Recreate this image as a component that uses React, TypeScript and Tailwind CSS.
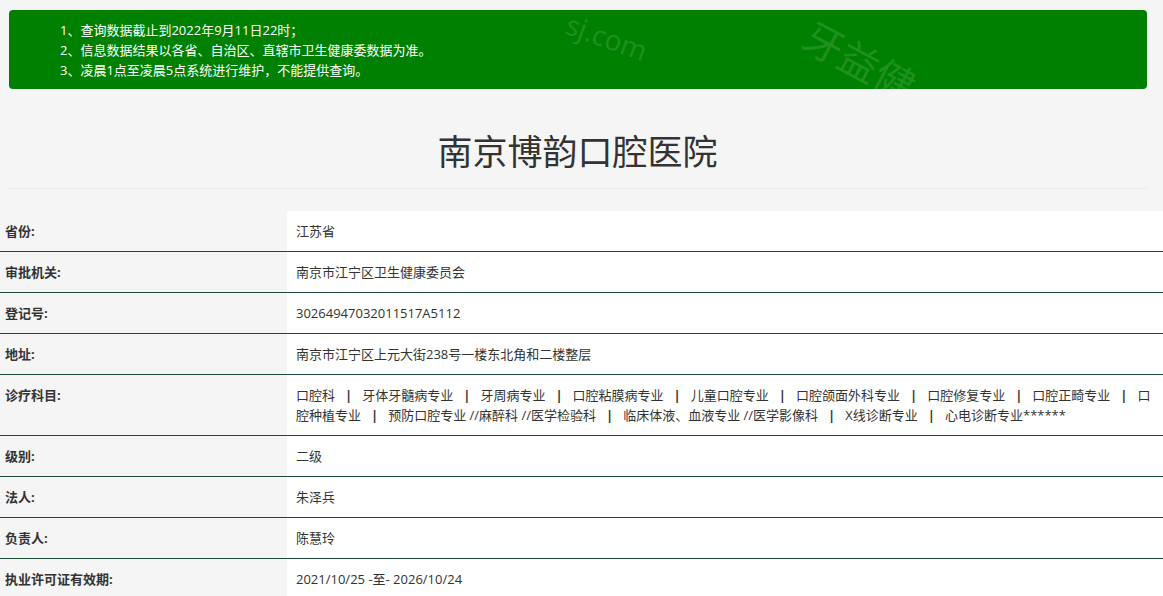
const NOTICES = [
  '1、查询数据截止到2022年9月11日22时；',
  '2、信息数据结果以各省、自治区、直辖市卫生健康委数据为准。',
  '3、凌晨1点至凌晨5点系统进行维护，不能提供查询。',
];

const SUBJECTS = [
  '口腔科',
  '牙体牙髓病专业',
  '牙周病专业',
  '口腔粘膜病专业',
  '儿童口腔专业',
  '口腔颌面外科专业',
  '口腔修复专业',
  '口腔正畸专业',
  '口腔种植专业',
  '预防口腔专业 //麻醉科 //医学检验科',
  '临床体液、血液专业 //医学影像科',
  'X线诊断专业',
  '心电诊断专业******',
];

const ROWS: { label: string; value: React.ReactNode }[] = [
  { label: '省份:', value: '江苏省' },
  { label: '审批机关:', value: '南京市江宁区卫生健康委员会' },
  { label: '登记号:', value: '30264947032011517A5112' },
  { label: '地址:', value: '南京市江宁区上元大街238号一楼东北角和二楼整层' },
  {
    label: '诊疗科目:',
    value: SUBJECTS.map((s, i) => (
      <span key={s}>
        {i > 0 && <span className="px-[10px] font-bold">|</span>}
        {s}
      </span>
    )),
  },
  { label: '级别:', value: '二级' },
  { label: '法人:', value: '朱泽兵' },
  { label: '负责人:', value: '陈慧玲' },
  { label: '执业许可证有效期:', value: '2021/10/25 -至- 2026/10/24' },
];

export default function App() {
  return (
    <div className="relative min-h-[596px] overflow-hidden bg-[#f5f5f5] pt-[10px] font-['Open_Sans','Noto_Sans_CJK_SC',sans-serif] text-[13px] text-[#333]">
      {/* notice banner */}
      <div className="mx-[9px] w-[1138px] rounded-[4px] bg-[#008000] pb-[9px] pl-[51px] pt-[10px] leading-[20px] text-white">
        {NOTICES.map((n) => (
          <p key={n}>{n}</p>
        ))}
      </div>

      {/* title */}
      <div className="mx-[8px] mt-[43px] w-[1139px] border-b border-[#e8e8e8] pb-[16px] text-center">
        <h1 className="text-[35px] font-normal leading-[40px] text-[#333]">南京博韵口腔医院</h1>
      </div>

      {/* detail table */}
      <div className="mt-[22px]">
        {ROWS.map((row) => (
          <div key={row.label} className="flex border-b border-[#1e4a3b]">
            <div className="w-[287px] shrink-0 py-[10px] pl-[5px] font-bold leading-[20px]">{row.label}</div>
            <div className="flex-1 bg-white py-[10px] pl-[9px] pr-[8px] leading-[20px]">{row.value}</div>
          </div>
        ))}
      </div>

      {/* faint watermarks */}
      <div className="pointer-events-none absolute left-[800px] top-[30px] rotate-[28deg] font-['Noto_Sans_CJK_SC',sans-serif] text-[40px] text-white/15">牙益健</div>
      <div className="pointer-events-none absolute left-[565px] top-[16px] rotate-[20deg] text-[28px] text-white/15">sj.com</div>
    </div>
  );
}
